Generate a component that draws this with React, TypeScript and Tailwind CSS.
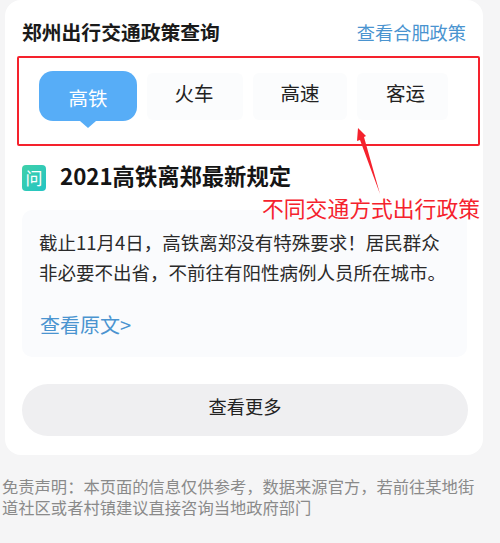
import React from 'react';

const FONT = "font-['Noto_Sans_CJK_SC','Noto_Sans',sans-serif]";

const TABS = [
  { label: '火车', box: 'w-[96px] pr-[2px]' },
  { label: '高速', box: 'w-[94px]' },
  { label: '客运', box: 'w-[91px] pl-[6px]' },
];

export default function App() {
  return (
    <div className={`${FONT} relative h-[543px] w-[500px] overflow-hidden bg-[#f5f5f6]`}>
      <div className="ml-[5px] h-[455px] w-[478px] rounded-[16px] bg-white px-[17px] pt-[17px]">
        <div className="flex h-[30px] items-center justify-between">
          <h1 className="text-[19.8px] leading-[30px] font-bold text-[#1a1a1a]">郑州出行交通政策查询</h1>
          <a className="text-[18.2px] leading-[30px] text-[#4a94d0]">查看合肥政策</a>
        </div>

        <div className="mt-[24px] flex h-[57px] items-start pl-[17px]">
          <div className="relative flex h-[50px] w-[98px] items-center justify-center rounded-[14px] bg-[#57adf7] pt-[4px] text-[19.5px] text-white">
            高铁
            <span className="absolute top-full left-1/2 h-0 w-0 -translate-x-1/2 border-x-[8px] border-t-[7px] border-x-transparent border-t-[#57adf7]" />
          </div>
          <div className="mt-[2px] ml-[10px] flex gap-[10px]">
            {TABS.map((tab) => (
              <div
                key={tab.label}
                className={`flex h-[47px] items-center justify-center rounded-[6px] bg-[#fbfcfd] pb-[7px] text-[19.5px] text-[#222222] ${tab.box}`}
              >
                {tab.label}
              </div>
            ))}
          </div>
        </div>

        <div className="mt-[36px] flex h-[27px] items-center">
          <span className="flex h-[26px] w-[24px] items-center justify-center rounded-[4px] bg-gradient-to-br from-[#3fd0a8] to-[#22c4c4] text-[17px] text-white">
            问
          </span>
          <h2 className="ml-[14px] pb-[3px] text-[22.3px] font-bold text-[#151515]">2021高铁离郑最新规定</h2>
        </div>

        <div className="mt-[19px] h-[147px] w-[445px] rounded-[10px] bg-[#fafbfd] pt-[17px] pl-[18px]">
          <p className="-ml-[1px] text-[18.5px] leading-[30px] whitespace-nowrap text-[#2a2a2a]">
            截止11月4日，高铁离郑没有特殊要求！居民群众
            <br />
            非必要不出省，不前往有阳性病例人员所在城市。
          </p>
          <a className="mt-[23px] block text-[20px] leading-[30px] text-[#4a94d0]">查看原文&gt;</a>
        </div>

        <button className="mt-[27px] block h-[52px] w-[446px] rounded-[26px] bg-[#efeff1] pb-[7px] text-[18.2px] text-[#222222]">
          查看更多
        </button>
      </div>

      <p className="mt-[21px] w-[480px] pl-[2px] text-[16.3px] leading-[21px] text-[#8a8a8a]">
        免责声明：本页面的信息仅供参考，数据来源官方，若前往某地街道社区或者村镇建议直接咨询当地政府部门
      </p>

      <div className="absolute top-[56px] left-[17px] h-[90px] w-[463px] rounded-[2px] border-2 border-[#f5222d]" />
      <svg className="absolute top-[124px] left-[350px]" width="36" height="72" viewBox="0 0 36 72">
        <path d="M8 4 L16 12 L14 13 L30 70 L10 16 L7 17 Z" fill="#f5222d" />
      </svg>
      <span className="absolute top-[192px] left-[262px] text-[21.8px] leading-[32px] whitespace-nowrap text-[#f5222d]">
        不同交通方式出行政策
      </span>
    </div>
  );
}
